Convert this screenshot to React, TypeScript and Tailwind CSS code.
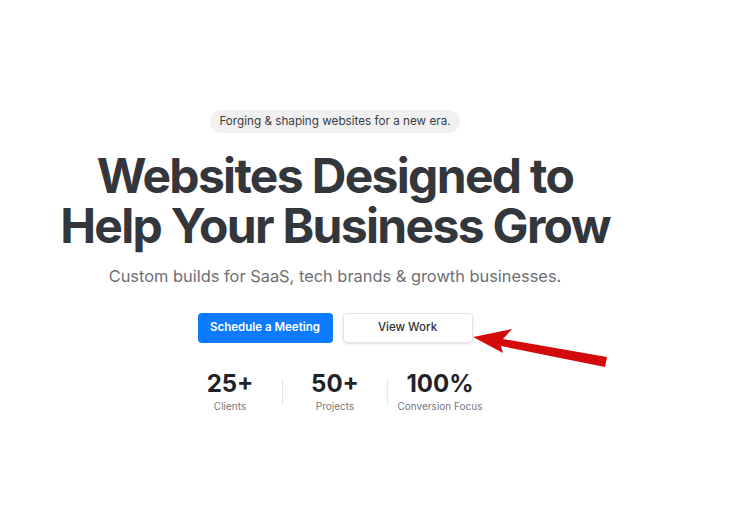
import React from 'react';

const Hero = () => {
  const stats = [
    { value: '25+', label: 'Clients' },
    { value: '50+', label: 'Projects' },
    { value: '100%', label: 'Conversion Focus' }
  ];

  return (
    <section className="relative w-[740px] h-[512px] bg-white font-['Inter',sans-serif]">
      <div className="w-[670px] flex flex-col items-center pt-[110px]">
        <div className="bg-[#f1f1f2] text-[#3a3d42] text-[11.7px] rounded-full px-[9px] h-[23px] flex items-center">
          Forging &amp; shaping websites for a new era.
        </div>

        <h1 className="mt-[18px] text-center text-[48px] leading-[50px] font-bold tracking-[-0.035em] text-[#33363b]">
          Websites Designed to
          <br />
          Help Your Business Grow
        </h1>

        <p className="mt-[14px] text-[16.4px] leading-[22px] text-[#6d6f74]">
          Custom builds for SaaS, tech brands &amp; growth businesses.
        </p>

        <div className="mt-[26px] flex gap-[10px]">
          <button className="w-[135px] h-[30px] rounded-[4px] bg-[#0b7bff] text-white text-[11.5px] font-semibold">
            Schedule a Meeting
          </button>
          <button className="w-[130px] h-[30px] rounded-[4px] bg-white border border-[#e2e3e6] shadow-sm text-[#2f3236] text-[11.5px] font-medium">
            View Work
          </button>
        </div>

        <div className="mt-[27px] flex items-center">
          {stats.map((stat, index) => (
            <React.Fragment key={index}>
              {index > 0 && <div className="w-px h-[26px] bg-[#e6e7e9]" />}
              <div className="flex flex-col items-center w-[104px]">
                <span className="text-[24px] leading-[28px] font-bold text-[#1f2226]">{stat.value}</span>
                <span className="text-[10px] leading-[13px] mt-[2px] text-[#76787c]">{stat.label}</span>
              </div>
            </React.Fragment>
          ))}
        </div>
      </div>

      {/* Annotation arrow */}
      <svg className="absolute left-0 top-0" width="740" height="512" viewBox="0 0 740 512">
        <polygon
          points="473,337 512,329 503,339 607,357 605,367 501,346 503,353"
          fill="#d40a0a"
        />
      </svg>
    </section>
  );
};

export default function App() {
  return <Hero />;
}
